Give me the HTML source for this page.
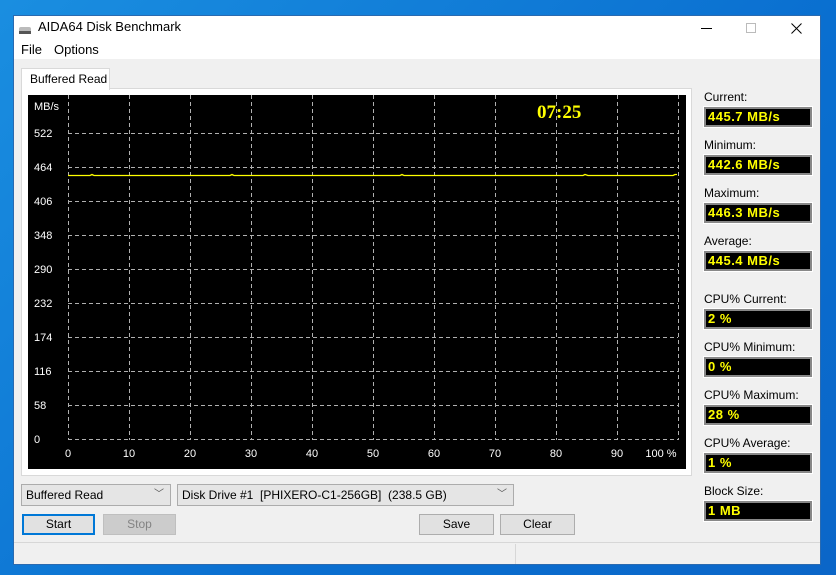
<!DOCTYPE html>
<html><head><style>
*{margin:0;padding:0;box-sizing:border-box}
body{width:836px;height:575px;overflow:hidden;background:linear-gradient(135deg,#1a8ee0,#0a6fd0 60%,#0b66c8);font-family:"Liberation Sans","Segoe UI",sans-serif;font-size:12px;color:#000;position:relative}
.a{position:absolute}
.win{left:13px;top:15px;width:808px;height:550px;background:#f0f0f0;border:1px solid #2a6ab0}
.lab{position:absolute;left:704px;font-size:12px}
.box{position:absolute;left:704px;width:108px;height:20px;background:#000;border:2px solid #888;outline:1px solid #fff;color:#ff0;font-weight:bold;font-size:13px;padding-left:2px;line-height:16px;letter-spacing:.5px}
.btn{position:absolute;height:21px;border:1px solid #adadad;background:#e1e1e1;text-align:center;line-height:19px;font-size:12px}
.cb{position:absolute;height:22px;border:1px solid #acacac;background:#e5e5e5;line-height:20px;padding-left:4px;font-size:12px}
.cb span{position:absolute;right:6px;top:0;color:#555;font-size:10px}
.yl{position:absolute;left:34px;color:#fff;font-size:11px}
.xl{position:absolute;top:448px;color:#fff;font-size:11px;transform:translateX(-50%)}
</style></head><body>
<div class="a win"></div>
<div class="a" style="left:14px;top:16px;width:806px;height:43px;background:#fff"></div>
<div class="a" style="left:19px;top:27px;width:12px;height:4px;background:#bbb;border-radius:2px 2px 0 0"></div>
<div class="a" style="left:19px;top:31px;width:12px;height:3px;background:#555"></div>
<div class="a" style="left:38px;top:19px;font-size:13px">AIDA64 Disk Benchmark</div>
<div class="a" style="left:21px;top:42px;font-size:13px">File</div>
<div class="a" style="left:54px;top:42px;font-size:13px">Options</div>
<div class="a" style="left:701px;top:28px;width:11px;height:1px;background:#000"></div>
<div class="a" style="left:746px;top:23px;width:10px;height:10px;border:1px solid #bbb"></div>
<svg class="a" style="left:791px;top:23px" width="11" height="11"><path d="M0.5 0.5L10.5 10.5M10.5 0.5L0.5 10.5" stroke="#000" stroke-width="1"/></svg>
<div class="a" style="left:21px;top:88px;width:671px;height:388px;background:#fff;border:1px solid #d9d9d9"></div>
<div class="a" style="left:21px;top:68px;width:89px;height:22px;background:#fff;border:1px solid #d9d9d9;border-bottom:none;padding:3px 0 0 8px;font-size:12px">Buffered Read</div>
<div class="a" style="left:28px;top:95px;width:658px;height:374px;background:#000"></div>
<svg class="a" style="left:0;top:0" width="836" height="575">
<g stroke="#b0b0b0" stroke-dasharray="4,3" stroke-width="1">
<line x1="68.5" y1="95" x2="68.5" y2="440"/><line x1="129.5" y1="95" x2="129.5" y2="440"/><line x1="190.5" y1="95" x2="190.5" y2="440"/><line x1="251.5" y1="95" x2="251.5" y2="440"/><line x1="312.5" y1="95" x2="312.5" y2="440"/><line x1="373.5" y1="95" x2="373.5" y2="440"/><line x1="434.5" y1="95" x2="434.5" y2="440"/><line x1="495.5" y1="95" x2="495.5" y2="440"/><line x1="556.5" y1="95" x2="556.5" y2="440"/><line x1="617.5" y1="95" x2="617.5" y2="440"/><line x1="678.5" y1="95" x2="678.5" y2="440"/>
<line x1="68" y1="133.5" x2="678" y2="133.5"/><line x1="68" y1="167.5" x2="678" y2="167.5"/><line x1="68" y1="201.5" x2="678" y2="201.5"/><line x1="68" y1="235.5" x2="678" y2="235.5"/><line x1="68" y1="269.5" x2="678" y2="269.5"/><line x1="68" y1="303.5" x2="678" y2="303.5"/><line x1="68" y1="337.5" x2="678" y2="337.5"/><line x1="68" y1="371.5" x2="678" y2="371.5"/><line x1="68" y1="405.5" x2="678" y2="405.5"/><line x1="68" y1="439.5" x2="678" y2="439.5"/>
</g>
<polyline fill="none" stroke="#ffff00" stroke-width="1.3" points="68,175.5 90,175.5 92,174.5 94,175.5 230,175.5 232,174.5 234,175.5 400,175.5 402,174.5 404,175.5 583,175.5 585,174.5 588,175.5 673,175.5 675,174.5 677,174.5"/>
</svg>
<div class="a" style="left:537px;top:102px;color:#ff0;font-family:'Liberation Serif',serif;font-weight:bold;font-size:19px">07:25</div>
<div class="yl" style="top:101px">MB/s</div>
<div class="yl" style="top:128px">522</div><div class="yl" style="top:162px">464</div><div class="yl" style="top:196px">406</div><div class="yl" style="top:230px">348</div><div class="yl" style="top:264px">290</div><div class="yl" style="top:298px">232</div><div class="yl" style="top:332px">174</div><div class="yl" style="top:366px">116</div><div class="yl" style="top:400px">58</div><div class="yl" style="top:434px">0</div>
<div class="xl" style="left:68px">0</div><div class="xl" style="left:129px">10</div><div class="xl" style="left:190px">20</div><div class="xl" style="left:251px">30</div><div class="xl" style="left:312px">40</div><div class="xl" style="left:373px">50</div><div class="xl" style="left:434px">60</div><div class="xl" style="left:495px">70</div><div class="xl" style="left:556px">80</div><div class="xl" style="left:617px">90</div><div class="xl" style="left:661px">100 %</div>
<div class="lab" style="top:90px">Current:</div><div class="box" style="top:107px">445.7 MB/s</div>
<div class="lab" style="top:138px">Minimum:</div><div class="box" style="top:155px">442.6 MB/s</div>
<div class="lab" style="top:186px">Maximum:</div><div class="box" style="top:203px">446.3 MB/s</div>
<div class="lab" style="top:234px">Average:</div><div class="box" style="top:251px">445.4 MB/s</div>
<div class="lab" style="top:292px">CPU% Current:</div><div class="box" style="top:309px">2 %</div>
<div class="lab" style="top:340px">CPU% Minimum:</div><div class="box" style="top:357px">0 %</div>
<div class="lab" style="top:388px">CPU% Maximum:</div><div class="box" style="top:405px">28 %</div>
<div class="lab" style="top:436px">CPU% Average:</div><div class="box" style="top:453px">1 %</div>
<div class="lab" style="top:484px">Block Size:</div><div class="box" style="top:501px">1 MB</div>
<div class="cb" style="left:21px;top:484px;width:150px">Buffered Read<span>﹀</span></div>
<div class="cb" style="left:177px;top:484px;width:337px">Disk Drive #1&nbsp; [PHIXERO-C1-256GB]&nbsp; (238.5 GB)<span>﹀</span></div>
<div class="btn" style="left:22px;top:514px;width:73px;border:2px solid #0078d7;line-height:17px">Start</div>
<div class="btn" style="left:103px;top:514px;width:73px;background:#ccc;border-color:#bfbfbf;color:#838383">Stop</div>
<div class="btn" style="left:419px;top:514px;width:75px">Save</div>
<div class="btn" style="left:500px;top:514px;width:75px">Clear</div>
<div class="a" style="left:14px;top:542px;width:806px;height:1px;background:#d7d7d7"></div>
<div class="a" style="left:515px;top:544px;width:1px;height:20px;background:#d7d7d7"></div>
</body></html>
